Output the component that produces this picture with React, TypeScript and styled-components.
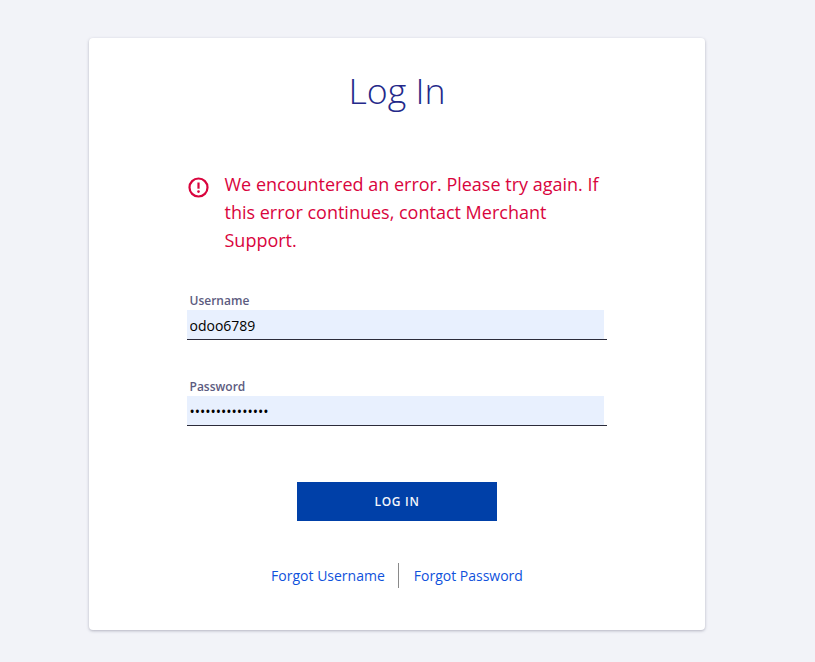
import React from "react";
import styled, { createGlobalStyle } from "styled-components";

const GlobalStyle = createGlobalStyle`
    html, body {
        margin: 0;
        padding: 0;
        background-color: #f2f3f8;
        font-family: "Open Sans", "Noto Sans", sans-serif;
    }
`;

const Page = styled.div`
    height: 662px;
    padding: 38px 0 0 89px;
    box-sizing: border-box;
    overflow: hidden;
`;

const Card = styled.main`
    width: 616px;
    height: 592px;
    box-sizing: border-box;
    padding: 0 98px;
    background-color: white;
    border-radius: 4px;
    box-shadow: 0 1px 3px rgba(60, 60, 90, 0.35);
    display: flex;
    flex-direction: column;
`;

const Title = styled.h1`
    margin: 28px 0 0;
    height: 49px;
    font-size: 35.7px;
    line-height: 49px;
    font-weight: 300;
    color: #24298a;
    text-align: center;
`;

const ErrorRow = styled.div`
    display: flex;
    align-items: flex-start;
    margin-top: 55px;
    gap: 15.5px;
    padding-left: 1px;
    color: #d9043d;
`;

const ErrorIcon = styled.svg`
    flex: none;
    width: 21px;
    height: 21px;
    margin-top: 6.5px;
`;

const ErrorText = styled.p`
    margin: 0;
    width: 384px;
    font-size: 18px;
    line-height: 28px;
`;

const Form = styled.form`
    display: flex;
    flex-direction: column;
    margin-top: 37px;
`;

const Field = styled.div`
    display: flex;
    flex-direction: column;
    margin-bottom: 37px;
`;

const Label = styled.label`
    height: 19px;
    padding-left: 3px;
    font-size: 12px;
    line-height: 19px;
    font-weight: 600;
    color: #5c5b80;
    margin-left: -0.5px;
`;

const InputLine = styled.div`
    width: 420px;
    border-bottom: 1px solid #2b2b3a;
`;

const Input = styled.input`
    display: block;
    width: 417px;
    height: 29px;
    box-sizing: border-box;
    padding: 1px 2.5px 0;
    border: none;
    outline: none;
    background-color: #e8f0fe;
    font-family: inherit;
    font-size: 14px;
    color: black;
`;

const SubmitButton = styled.button`
    align-self: center;
    width: 200px;
    height: 39px;
    margin-top: 19px;
    border: none;
    background-color: #0040a8;
    color: #f4f6fb;
    font-family: inherit;
    font-size: 12px;
    font-weight: 600;
    letter-spacing: 0.7px;
`;

const Links = styled.nav`
    display: flex;
    justify-content: center;
    align-items: flex-start;
    margin-top: 42px;
`;

const ForgotLink = styled.a`
    font-size: 14px;
    line-height: 26px;
    color: #0f52dc;
    text-decoration: none;
`;

const Divider = styled.span`
    width: 1px;
    height: 25px;
    margin: 0 14.6px 0 13.4px;
    background-color: #8a8a8a;
`;

export default function App() {
    return (
        <Page>
            <GlobalStyle />
            <Card>
                <Title>Log In</Title>
                <ErrorRow>
                    <ErrorIcon viewBox="0 0 21 21" fill="none">
                        <circle cx="10.5" cy="10.5" r="9" stroke="currentColor" strokeWidth="2.2" />
                        <path d="M10.5 5.5v6.2" stroke="currentColor" strokeWidth="2.2" />
                        <circle cx="10.5" cy="14.6" r="1.3" fill="currentColor" />
                    </ErrorIcon>
                    <ErrorText>
                        We encountered an error. Please try again. If this error continues, contact Merchant Support.
                    </ErrorText>
                </ErrorRow>
                <Form onSubmit={e => e.preventDefault()}>
                    <Field>
                        <Label htmlFor="username">Username</Label>
                        <InputLine>
                            <Input id="username" type="text" defaultValue="odoo6789" />
                        </InputLine>
                    </Field>
                    <Field>
                        <Label htmlFor="password">Password</Label>
                        <InputLine>
                            <Input id="password" type="password" defaultValue="abcdefghijklmno" />
                        </InputLine>
                    </Field>
                    <SubmitButton type="submit">LOG IN</SubmitButton>
                </Form>
                <Links>
                    <ForgotLink href="#">Forgot Username</ForgotLink>
                    <Divider />
                    <ForgotLink href="#">Forgot Password</ForgotLink>
                </Links>
            </Card>
        </Page>
    );
}
